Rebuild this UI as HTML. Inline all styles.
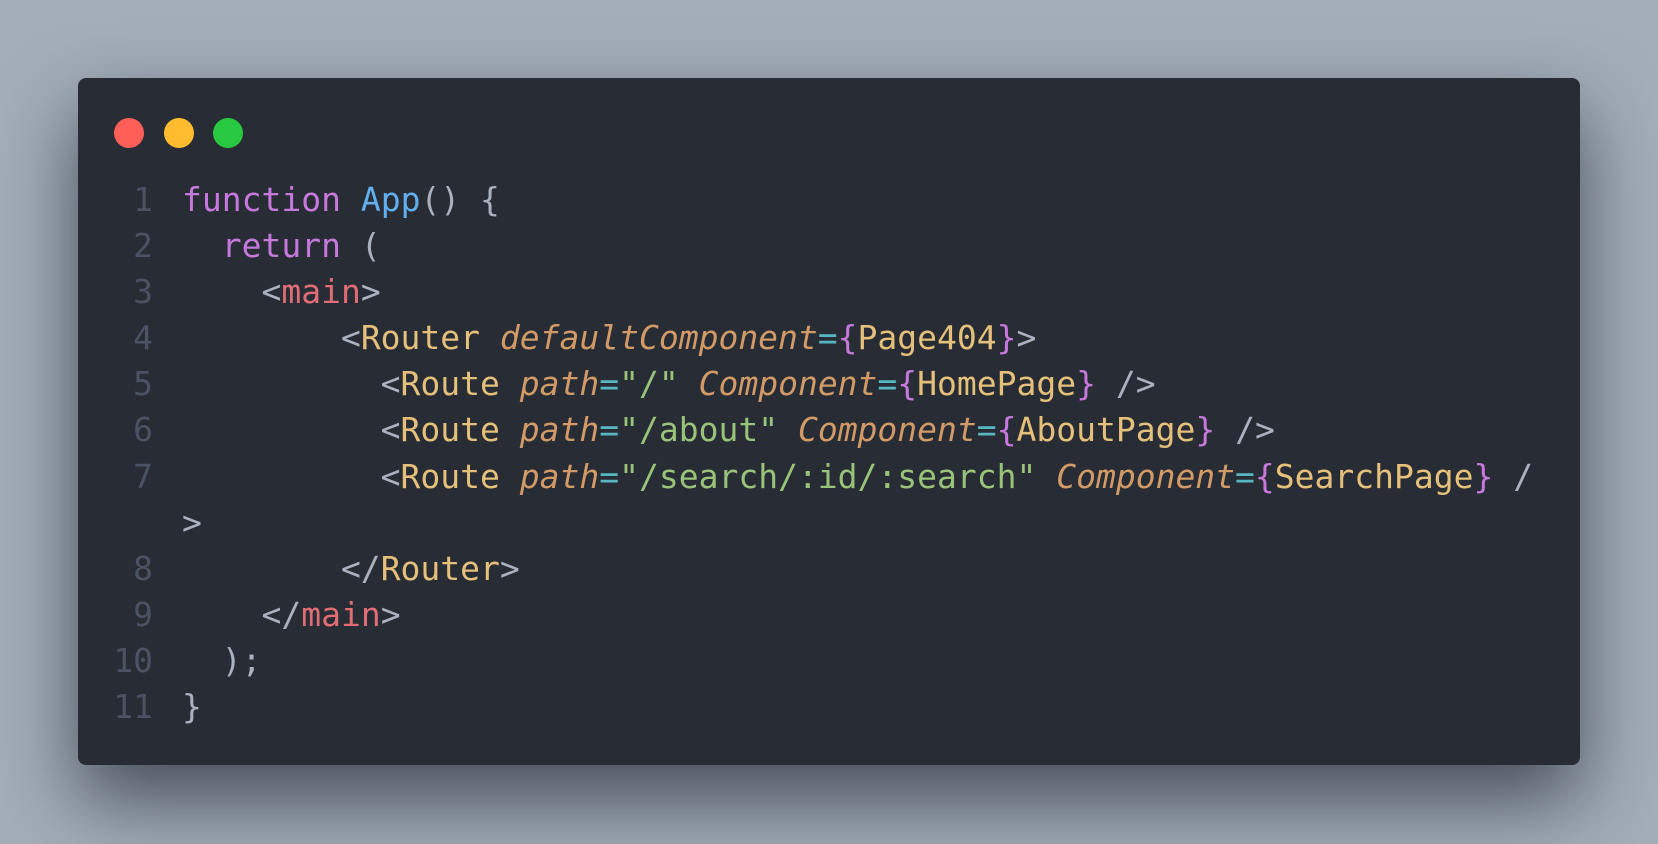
<!DOCTYPE html>
<html><head><meta charset="utf-8"><style>
html,body{margin:0;padding:0;width:1658px;height:844px;overflow:hidden;background:#a4aeb8;}
.win{position:absolute;left:78px;top:78px;width:1502px;height:687px;background:#282c34;border-radius:8px;box-shadow:0 35px 80px rgba(20,25,35,0.65);}
.dot{position:absolute;top:118px;width:30px;height:30px;border-radius:50%;}
.code{position:absolute;left:0;top:177px;font-family:"DejaVu Sans Mono","Liberation Mono",monospace;font-size:33px;line-height:46.1px;color:#abb2bf;white-space:pre;}
.ln{display:inline-block;width:153px;text-align:right;color:#4b5263;margin-right:29px;}
.k{color:#c678dd}.f{color:#61afef}.t{color:#e06c75}.c{color:#e5c07b}.a{color:#d19a66;font-style:italic}.e{color:#56b6c2}.s{color:#98c379}.b{color:#c678dd}
</style></head><body>
<div class="win"></div>
<div class="dot" style="left:114px;background:#ff5f57"></div>
<div class="dot" style="left:164px;background:#febc2e"></div>
<div class="dot" style="left:213px;background:#28c840"></div>
<div class="code"><div><span class="ln">1</span><span class="k">function</span> <span class="f">App</span>() {</div><div><span class="ln">2</span>  <span class="k">return</span> (</div><div><span class="ln">3</span>    &lt;<span class="t">main</span>&gt;</div><div><span class="ln">4</span>        &lt;<span class="c">Router</span> <span class="a">defaultComponent</span><span class="e">=</span><span class="b">{</span><span class="c">Page404</span><span class="b">}</span>&gt;</div><div><span class="ln">5</span>          &lt;<span class="c">Route</span> <span class="a">path</span><span class="e">=</span><span class="s">"/"</span> <span class="a">Component</span><span class="e">=</span><span class="b">{</span><span class="c">HomePage</span><span class="b">}</span> /&gt;</div><div><span class="ln">6</span>          &lt;<span class="c">Route</span> <span class="a">path</span><span class="e">=</span><span class="s">"/about"</span> <span class="a">Component</span><span class="e">=</span><span class="b">{</span><span class="c">AboutPage</span><span class="b">}</span> /&gt;</div><div><span class="ln">7</span>          &lt;<span class="c">Route</span> <span class="a">path</span><span class="e">=</span><span class="s">"/search/:id/:search"</span> <span class="a">Component</span><span class="e">=</span><span class="b">{</span><span class="c">SearchPage</span><span class="b">}</span> /</div><div><span class="ln"></span>&gt;</div><div><span class="ln">8</span>        &lt;/<span class="c">Router</span>&gt;</div><div><span class="ln">9</span>    &lt;/<span class="t">main</span>&gt;</div><div><span class="ln">10</span>  );</div><div><span class="ln">11</span>}</div></div>
</body></html>
